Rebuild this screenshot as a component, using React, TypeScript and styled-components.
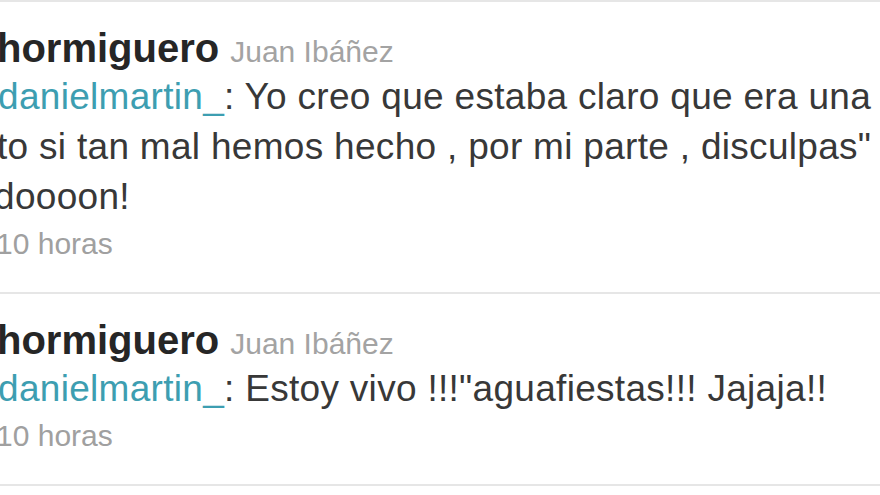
import React from 'react'
import styled, { createGlobalStyle } from 'styled-components'

const GlobalStyle = createGlobalStyle`
  html, body {
    margin: 0;
    padding: 0;
    background: #fff;
  }
  body {
    font-family: 'Liberation Sans', Arial, sans-serif;
  }
`

interface TweetData {
  screenName: string
  realName: string
  mention: string
  lines: string[]
  time: string
}

// the screenshot is a zoomed crop, so every line starts a little past the left edge
const tweets: TweetData[] = [
  {
    screenName: 'hormiguero',
    realName: 'Juan Ibáñez',
    mention: 'danielmartin_',
    lines: [
      ': Yo creo que estaba claro que era una',
      'to si tan mal hemos hecho , por mi parte , disculpas" "',
      'doooon!'
    ],
    time: '10 horas'
  },
  {
    screenName: 'hormiguero',
    realName: 'Juan Ibáñez',
    mention: 'danielmartin_',
    lines: [': Estoy vivo !!!"aguafiestas!!! Jajaja!!'],
    time: '10 horas'
  }
]

const lineShift = [-2, -3, -6]

const Page = styled.div`
  width: 880px;
  height: 495px;
  overflow: hidden;
  background: #fff;
`

const Timeline = styled.div`
  border-bottom: 2px solid #e6e6e6;
`

const Tweet = styled.div`
  border-top: 2px solid #e6e6e6;
  padding: 22px 0 26px;
`

const Header = styled.div<{ $shift: number }>`
  display: flex;
  align-items: baseline;
  gap: 11px;
  height: 48px;
  line-height: 48px;
  margin-left: ${p => p.$shift}px;
  white-space: nowrap;
`

const ScreenName = styled.span`
  font-size: 40px;
  font-weight: 700;
  color: #262626;
`

const RealName = styled.span`
  font-size: 30px;
  color: #a3a3a3;
`

const Line = styled.div<{ $shift: number }>`
  font-size: 37px;
  line-height: 50px;
  letter-spacing: 0.3px;
  color: #383838;
  white-space: nowrap;
  margin-left: ${p => p.$shift}px;
`

const Mention = styled.span`
  color: #3d9eb1;
`

const Time = styled.div`
  font-size: 30px;
  line-height: 44px;
  color: #a0a0a0;
  margin-left: -4px;
  white-space: nowrap;
`

const App = (): JSX.Element => (
  <Page>
    <GlobalStyle />
    <Timeline>
      {tweets.map((tweet, i) => (
        <Tweet key={i}>
          <Header $shift={-3}>
            <ScreenName>{tweet.screenName}</ScreenName>
            <RealName>{tweet.realName}</RealName>
          </Header>
          {tweet.lines.map((line, j) => (
            <Line key={j} $shift={lineShift[j]}>
              {j === 0 && <Mention>{tweet.mention}</Mention>}
              {line}
            </Line>
          ))}
          <Time>{tweet.time}</Time>
        </Tweet>
      ))}
    </Timeline>
  </Page>
)

export default App
